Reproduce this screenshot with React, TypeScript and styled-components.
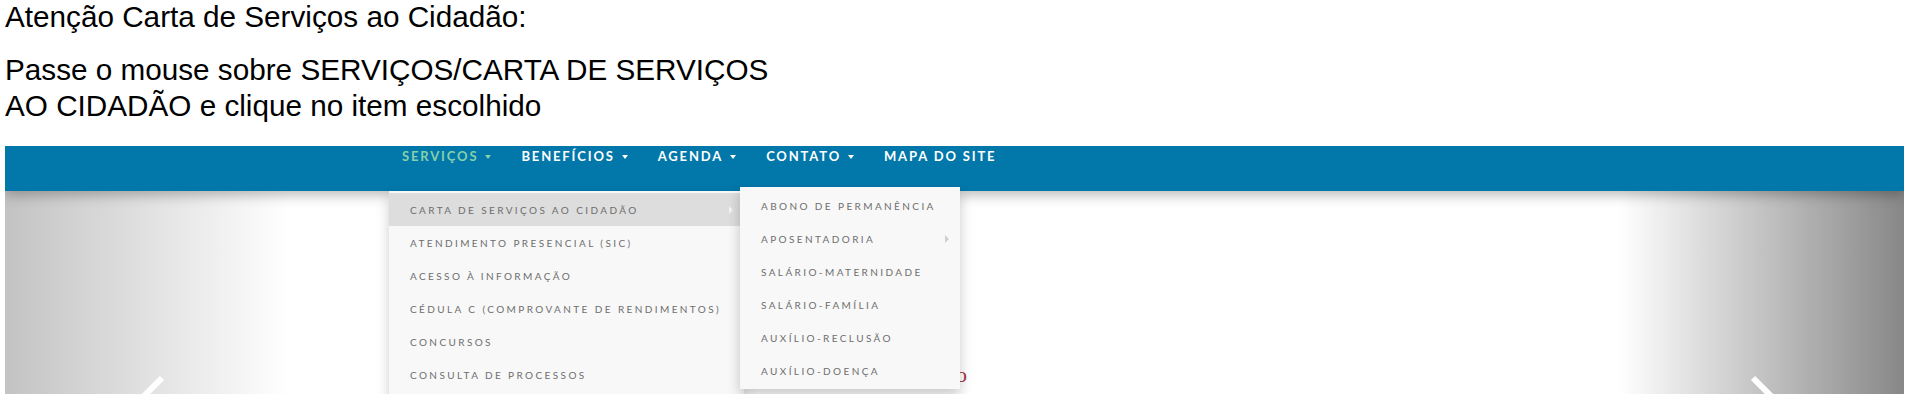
import React from "react";
import styled, { createGlobalStyle } from "styled-components";

const GlobalStyle = createGlobalStyle`
  html, body { margin: 0; padding: 0; background: #ffffff; }
  ul { margin: 0; padding: 0; list-style: none; }
`;

const Page = styled.div`
  width: 1899px;
  padding-left: 5px;
  font-family: "Liberation Sans", Arial, sans-serif;
`;

const Notice = styled.p<{ $top: number; $lh: number }>`
  margin: ${(p) => p.$top}px 0 0 0;
  font-family: "Liberation Sans", Arial, sans-serif;
  font-size: 29.7px;
  line-height: ${(p) => p.$lh}px;
  color: #000;
`;

const Shot = styled.div`
  margin-top: 22px;
  height: 248px;
  overflow: hidden;
`;

const NavBar = styled.nav`
  position: relative;
  z-index: 5;
  height: 45px;
  background: #0177aa;
  box-shadow: 0 4px 12px rgba(0, 0, 0, 0.28);
`;

const NavList = styled.ul`
  display: flex;
  margin-left: 382px !important;
  height: 45px;
`;

const NavItem = styled.li`
  position: relative;
  height: 45px;
  padding: 0 15px;
`;

const NavLink = styled.a<{ $active?: boolean }>`
  display: flex;
  align-items: center;
  gap: 7px;
  padding-top: 1px;
  line-height: 18px;
  font-family: Lato, "Open Sans", sans-serif;
  font-weight: 700;
  font-size: 13px;
  letter-spacing: 1.85px;
  color: ${(p) => (p.$active ? "#86d0aa" : "#ffffff")};
  text-decoration: none;
  white-space: nowrap;
`;

const Caret = styled.span`
  display: inline-block;
  width: 0;
  height: 0;
  border-left: 3.5px solid transparent;
  border-right: 3.5px solid transparent;
  border-top: 4px solid currentColor;
  margin-top: 1px;
`;

const Dropdown = styled.ul`
  position: absolute;
  top: 100%;
  left: 2px;
  width: 355px;
  padding: 2px 0 !important;
  background: #f8f8f8;
  box-shadow: 0 6px 12px rgba(0, 0, 0, 0.2);
`;

const SubMenu = styled.ul`
  position: absolute;
  top: -6px;
  left: calc(100% - 4px);
  width: 220px;
  padding: 2px 0 !important;
  background: #f8f8f8;
  box-shadow: 0 6px 12px rgba(0, 0, 0, 0.22);
  z-index: 2;
`;

const DropItem = styled.li<{ $active?: boolean }>`
  position: relative;
  display: flex;
  align-items: center;
  justify-content: space-between;
  height: 33px;
  padding: 0 11px 0 21px;
  font-family: Lato, "Open Sans", sans-serif;
  font-size: 10px;
  letter-spacing: 2.4px;
  color: #6e6e6e;
  white-space: nowrap;
  background: ${(p) => (p.$active ? "#dddddd" : "transparent")};
`;

const SubArrow = styled.span<{ $light?: boolean }>`
  flex: none;
  width: 0;
  height: 0;
  border-top: 4px solid transparent;
  border-bottom: 4px solid transparent;
  border-left: 4px solid ${(p) => (p.$light ? "#f4f4f4" : "#cfcfcf")};
`;

const Carousel = styled.div`
  display: flex;
  height: 203px;
  background: #ffffff;
`;

const Control = styled.div<{ $side: "left" | "right" }>`
  display: flex;
  justify-content: center;
  align-items: flex-start;
  width: 285px;
  flex: none;
  box-sizing: border-box;
  padding-top: 184px;
  padding-left: ${(p) => (p.$side === "left" ? "11px" : "0")};
  background: ${(p) =>
    p.$side === "left"
      ? "linear-gradient(to right, rgba(0,0,0,0.235), rgba(0,0,0,0))"
      : "linear-gradient(to right, rgba(0,0,0,0), rgba(0,0,0,0.47))"};
`;

const Chevron = styled.svg`
  flex: none;
  width: 30px;
  height: 44px;
`;

const Content = styled.div`
  flex: 1;
  display: flex;
  align-items: flex-start;
`;

const TitleBox = styled.div`
  width: 677px;
  padding-top: 171px;
  text-align: right;
`;

const Title = styled.span`
  font-family: "Liberation Serif", "Times New Roman", serif;
  font-size: 22px;
  color: #a23844;
`;

const servicos = [
  "CARTA DE SERVIÇOS AO CIDADÃO",
  "ATENDIMENTO PRESENCIAL (SIC)",
  "ACESSO À INFORMAÇÃO",
  "CÉDULA C (COMPROVANTE DE RENDIMENTOS)",
  "CONCURSOS",
  "CONSULTA DE PROCESSOS",
  "LEGISLAÇÃO",
];

const carta = [
  "ABONO DE PERMANÊNCIA",
  "APOSENTADORIA",
  "SALÁRIO-MATERNIDADE",
  "SALÁRIO-FAMÍLIA",
  "AUXÍLIO-RECLUSÃO",
  "AUXÍLIO-DOENÇA",
];

const navItems = [
  { label: "SERVIÇOS", caret: true, active: true },
  { label: "BENEFÍCIOS", caret: true },
  { label: "AGENDA", caret: true },
  { label: "CONTATO", caret: true },
  { label: "MAPA DO SITE", caret: false },
];

export default function App() {
  return (
    <>
      <GlobalStyle />
      <Page>
        <Notice $top={0} $lh={34}>Atenção Carta de Serviços ao Cidadão:</Notice>
        <Notice $top={18} $lh={36}>
          Passe o mouse sobre SERVIÇOS/CARTA DE SERVIÇOS
          <br />
          AO CIDADÃO e clique no item escolhido
        </Notice>
        <Shot>
          <NavBar>
            <NavList>
              {navItems.map((item) => (
                <NavItem key={item.label}>
                  <NavLink $active={item.active}>
                    {item.label}
                    {item.caret && <Caret />}
                  </NavLink>
                  {item.active && (
                    <Dropdown>
                      {servicos.map((s, i) => (
                        <DropItem key={s} $active={i === 0}>
                          <span>{s}</span>
                          {i === 0 && (
                            <>
                              <SubArrow $light />
                              <SubMenu>
                                {carta.map((c) => (
                                  <DropItem key={c}>
                                    <span>{c}</span>
                                    {c === "APOSENTADORIA" && <SubArrow />}
                                  </DropItem>
                                ))}
                              </SubMenu>
                            </>
                          )}
                        </DropItem>
                      ))}
                    </Dropdown>
                  )}
                </NavItem>
              ))}
            </NavList>
          </NavBar>
          <Carousel>
            <Control $side="left">
              <Chevron viewBox="0 0 30 44">
                <polyline points="24,3 6,21 24,39" fill="none" stroke="#ffffff" strokeWidth="6" />
              </Chevron>
            </Control>
            <Content>
              <TitleBox>
                <Title>Carta de Serviços ao Cidadão</Title>
              </TitleBox>
            </Content>
            <Control $side="right">
              <Chevron viewBox="0 0 30 44">
                <polyline points="6,3 24,21 6,39" fill="none" stroke="#ffffff" strokeWidth="6" />
              </Chevron>
            </Control>
          </Carousel>
        </Shot>
      </Page>
    </>
  );
}
